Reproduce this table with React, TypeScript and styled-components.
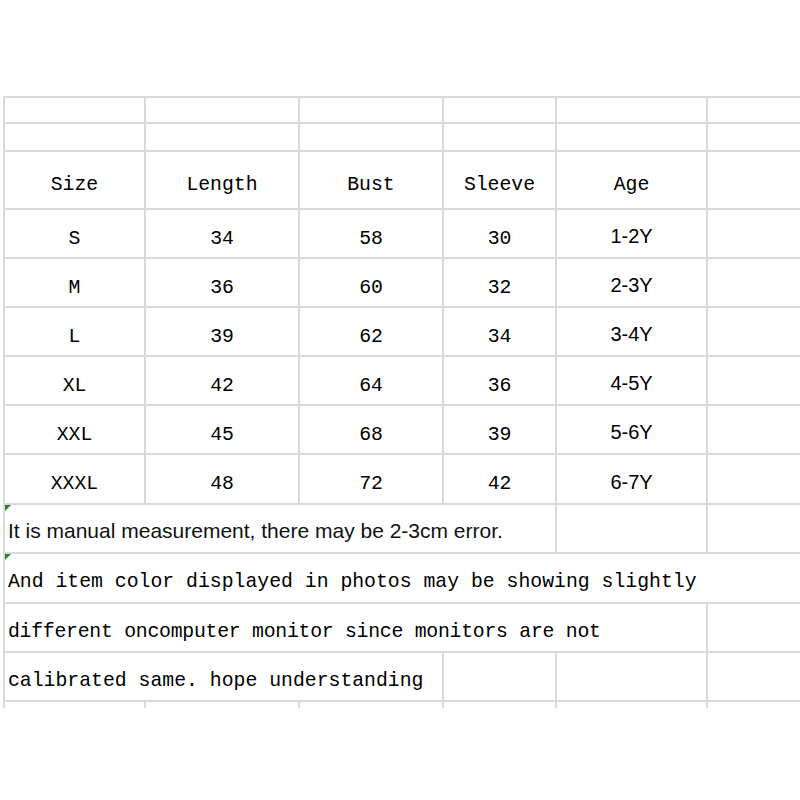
import React from "react";
import styled, { createGlobalStyle, css } from "styled-components";

const Global = createGlobalStyle`
  html, body { margin: 0; padding: 0; background: #ffffff; overflow: hidden; }
  #root { width: 800px; height: 800px; }
`;

const LINE = "#d9d9d9";
const MONO = `"Liberation Mono", "Courier New", monospace`;
const SANS = `"Liberation Sans", Arial, sans-serif`;

const Page = styled.div`
  width: 800px;
  height: 800px;
  padding: 96px 0 0 3px;
  box-sizing: border-box;
  overflow: hidden;
`;

const Sheet = styled.div`
  display: grid;
  width: 797px;
  grid-template-columns: 141px 154px 144px 113px 151px 1fr;
  grid-template-rows: 26px 28px 58px 49px 49px 49px 49px 49px 50px 49px 50px 49px 49px 6px;
  border-top: 2px solid ${LINE};
  border-left: 2px solid ${LINE};
  box-sizing: border-box;
`;

const Cell = styled.div<{ $span?: number; $noRight?: boolean; $sans?: boolean }>`
  box-sizing: border-box;
  display: flex;
  align-items: center;
  justify-content: center;
  padding-top: ${(p) => (p.$sans ? "6px" : "10px")};
  border-right: 2px solid ${LINE};
  border-bottom: 2px solid ${LINE};
  font-family: ${(p) => (p.$sans ? SANS : MONO)};
  font-size: ${(p) => (p.$sans ? "20px" : "19.8px")};
  color: #000;
  white-space: nowrap;
  ${(p) => p.$span && css`grid-column: span ${p.$span};`}
  ${(p) => p.$noRight && css`border-right: none;`}
`;

const NoteCell = styled(Cell)<{ $flag?: boolean }>`
  position: relative;
  justify-content: flex-start;
  padding-left: 3px;
  padding-top: ${(p) => (p.$sans ? "4px" : "8px")};
  overflow: visible;
  ${(p) =>
    p.$flag &&
    css`
      &::before {
        content: "";
        position: absolute;
        left: 0;
        top: 0;
        width: 0;
        height: 0;
        border-top: 6px solid #1f8a1f;
        border-right: 6px solid transparent;
      }
    `}
`;

const SansNote = styled.span`
  font-family: ${SANS};
  font-size: 21px;
  color: #111;
`;

const MonoNote = styled.span<{ $tight?: boolean }>`
  white-space: pre;
  ${(p) => p.$tight && css`letter-spacing: -0.25px;`}
`;

const Tick = styled.div<{ $noRight?: boolean }>`
  border-right: ${(p) => (p.$noRight ? "none" : `2px solid ${LINE}`)};
`;

const headers = ["Size", "Length", "Bust", "Sleeve", "Age"];
const rows: [string, string, string, string, string][] = [
  ["S", "34", "58", "30", "1-2Y"],
  ["M", "36", "60", "32", "2-3Y"],
  ["L", "39", "62", "34", "3-4Y"],
  ["XL", "42", "64", "36", "4-5Y"],
  ["XXL", "45", "68", "39", "5-6Y"],
  ["XXXL", "48", "72", "42", "6-7Y"],
];

const EmptyRow: React.FC = () => (
  <>
    {[0, 1, 2, 3, 4].map((i) => (
      <Cell key={i} />
    ))}
    <Cell $noRight />
  </>
);

export default function App() {
  return (
    <>
      <Global />
      <Page>
        <Sheet>
          <EmptyRow />
          <EmptyRow />
          {headers.map((h) => (
            <Cell key={h}>{h}</Cell>
          ))}
          <Cell $noRight />
          {rows.map((r) => (
            <React.Fragment key={r[0]}>
              <Cell>{r[0]}</Cell>
              <Cell>{r[1]}</Cell>
              <Cell>{r[2]}</Cell>
              <Cell>{r[3]}</Cell>
              <Cell $sans>{r[4]}</Cell>
              <Cell $noRight />
            </React.Fragment>
          ))}
          <NoteCell $span={4} $flag $sans>
            <SansNote>It is manual measurement, there may be 2-3cm error.</SansNote>
          </NoteCell>
          <Cell />
          <Cell $noRight />
          <NoteCell $span={6} $flag $noRight>
            <MonoNote>And item color displayed in photos may be showing slightly</MonoNote>
          </NoteCell>
          <NoteCell $span={5}>
            <MonoNote $tight>different oncomputer monitor since monitors are not</MonoNote>
          </NoteCell>
          <Cell $noRight />
          <NoteCell $span={3}>
            <MonoNote>calibrated same. hope understanding</MonoNote>
          </NoteCell>
          <Cell />
          <Cell />
          <Cell $noRight />
          <Tick />
          <Tick />
          <Tick />
          <Tick />
          <Tick />
          <Tick $noRight />
        </Sheet>
      </Page>
    </>
  );
}
